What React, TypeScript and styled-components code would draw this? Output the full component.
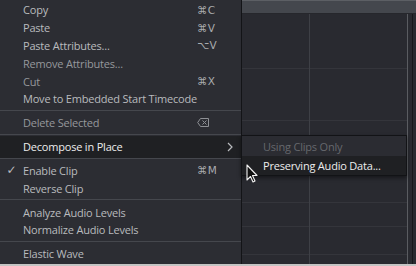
import styled, { createGlobalStyle } from 'styled-components';

type Item =
  | { kind: 'sep' }
  | {
      kind?: 'item';
      label: string;
      shortcut?: string;
      disabled?: boolean;
      checked?: boolean;
      active?: boolean;
      submenu?: boolean;
      del?: boolean;
    };

const ITEMS: Item[] = [
  { label: 'Copy', shortcut: '⌘C' },
  { label: 'Paste', shortcut: '⌘V' },
  { label: 'Paste Attributes...', shortcut: '⌥V' },
  { label: 'Remove Attributes...', disabled: true },
  { label: 'Cut', shortcut: '⌘X', disabled: true },
  { label: 'Move to Embedded Start Timecode' },
  { kind: 'sep' },
  { label: 'Delete Selected', disabled: true, del: true },
  { kind: 'sep' },
  { label: 'Decompose in Place', active: true, submenu: true },
  { kind: 'sep' },
  { label: 'Enable Clip', shortcut: '⌘M', checked: true },
  { label: 'Reverse Clip' },
  { kind: 'sep' },
  { label: 'Analyze Audio Levels' },
  { label: 'Normalize Audio Levels' },
  { kind: 'sep' },
  { label: 'Elastic Wave' },
];

const GlobalStyle = createGlobalStyle`
  body {
    margin: 0;
    background: #292a30;
    font-family: 'Open Sans', 'Noto Sans', sans-serif;
  }
`;

export default function App() {
  return (
    <Window>
      <GlobalStyle />
      <Menu>
        {ITEMS.map((item, i) =>
          item.kind === 'sep' ? (
            <Separator key={i} />
          ) : (
            <Row key={i} $active={item.active} $disabled={item.disabled}>
              <Check>{item.checked ? '✓' : ''}</Check>
              <Label>{item.label}</Label>
              {item.shortcut && <Shortcut>{item.shortcut}</Shortcut>}
              {item.del && (
                <Shortcut>
                  <DeleteIcon />
                </Shortcut>
              )}
              {item.submenu && (
                <Chevron viewBox='0 0 6 10'>
                  <path d='M1 1l4 4-4 4' />
                </Chevron>
              )}
            </Row>
          ),
        )}
      </Menu>

      <Canvas>
        <Ruler />
        <Tracks>
          <svg width='174' height='251' viewBox='0 0 174 251'>
            <g stroke='#34353b' strokeWidth='1'>
              <line x1='0' y1='54.5' x2='165' y2='54.5' />
              <line x1='0' y1='106.5' x2='165' y2='106.5' />
              <line x1='0' y1='188.5' x2='165' y2='188.5' />
              <line x1='0' y1='212.5' x2='165' y2='212.5' />
              <line x1='0' y1='240.5' x2='165' y2='240.5' />
            </g>
            <line x1='67.5' y1='0' x2='67.5' y2='251' stroke='#3e4046' />
            <line x1='165.5' y1='-14' x2='165.5' y2='251' stroke='#5a5c61' />
            <line x1='170.5' y1='0' x2='170.5' y2='251' stroke='#17181b' />
          </svg>
        </Tracks>
      </Canvas>

      <SubMenu>
        <SubRow $disabled>Using Clips Only</SubRow>
        <SubRow $active>Preserving Audio Data...</SubRow>
      </SubMenu>

      <Cursor viewBox='0 0 12 19'>
        <path
          d='M1 1v15l3.5-3.5 2.5 5.5 2-1-2.5-5.5H11z'
          fill='#111'
          stroke='#f2f2f2'
          strokeWidth='1.1'
          strokeLinejoin='round'
        />
      </Cursor>
    </Window>
  );
}

function DeleteIcon() {
  return (
    <svg width='12' height='9' viewBox='0 0 12 9'>
      <path
        d='M3.5 0.5h8v8h-8L0.7 4.5z'
        fill='none'
        stroke='#8e9095'
        strokeWidth='1'
      />
      <path d='M5.5 2.5l4 4M9.5 2.5l-4 4' stroke='#8e9095' strokeWidth='1' />
    </svg>
  );
}

const Window = styled.div`
  position: relative;
  width: 416px;
  height: 266px;
  display: flex;
  overflow: hidden;
  border-bottom: 2px solid #c4c4c4;
  box-sizing: border-box;
  background: #292a30;
`;

const Menu = styled.div`
  width: 241px;
  flex-shrink: 0;
  display: flex;
  flex-direction: column;
  padding-top: 1px;
  background: #2c2d33;
  border-right: 1px solid #131417;
  box-sizing: content-box;
`;

const Row = styled.div<{ $active?: boolean; $disabled?: boolean }>`
  height: ${({ $active }) => ($active ? '22px' : '17.8px')};
  flex-shrink: 0;
  display: flex;
  align-items: center;
  padding-right: 9px;
  font-size: 11px;
  letter-spacing: -0.2px;
  color: ${({ $active, $disabled }) =>
    $active ? '#ededed' : $disabled ? '#96989c' : '#b9bbbe'};
  background: ${({ $active }) => ($active ? '#1f2023' : 'transparent')};
  margin: ${({ $active }) => ($active ? '-2px 0' : '0')};
`;

const Check = styled.span`
  width: 23px;
  flex-shrink: 0;
  text-align: center;
  font-size: 12px;
  color: #b9bbbe;
  font-family: 'DejaVu Sans', sans-serif;
`;

const Label = styled.span`
  flex: 1;
  white-space: nowrap;
`;

const Shortcut = styled.span`
  width: 35px;
  display: flex;
  align-items: center;
  font-size: 10.5px;
  letter-spacing: 0.3px;
  color: #a9abae;
  font-family: 'DejaVu Sans', sans-serif;
`;

const Chevron = styled.svg`
  width: 6px;
  height: 10px;
  margin-right: -1px;
  fill: none;
  stroke: #b9bbbe;
  stroke-width: 1.2;
`;

const Separator = styled.div`
  height: 1px;
  flex-shrink: 0;
  margin: 2px 0 3px;
  background: #45474d;
`;

const Canvas = styled.div`
  flex: 1;
  display: flex;
  flex-direction: column;
  background: #4c4f54;
`;

const Ruler = styled.div`
  height: 12px;
  flex-shrink: 0;
  background: #44474d;
  border-top: 1px solid #5c5f64;
`;

const Tracks = styled.div`
  flex: 1;
  background: #292a30;
  border-top: 1px solid #26272c;
  svg {
    display: block;
  }
`;

const SubMenu = styled.div`
  position: absolute;
  left: 241px;
  top: 135px;
  width: 164px;
  display: flex;
  flex-direction: column;
  padding-top: 1px;
  background: #2b2c32;
  border: 1px solid #121316;
  box-shadow: 0 2px 4px rgba(0, 0, 0, 0.45);
`;

const SubRow = styled.div<{ $active?: boolean; $disabled?: boolean }>`
  height: 19px;
  display: flex;
  align-items: center;
  padding-left: 21px;
  font-size: 11px;
  letter-spacing: -0.2px;
  color: ${({ $active, $disabled }) =>
    $active ? '#ededed' : $disabled ? '#66686d' : '#b9bbbe'};
  background: ${({ $active }) => ($active ? '#1f2023' : 'transparent')};
`;

const Cursor = styled.svg`
  position: absolute;
  left: 246px;
  top: 164px;
  width: 12px;
  height: 19px;
`;
